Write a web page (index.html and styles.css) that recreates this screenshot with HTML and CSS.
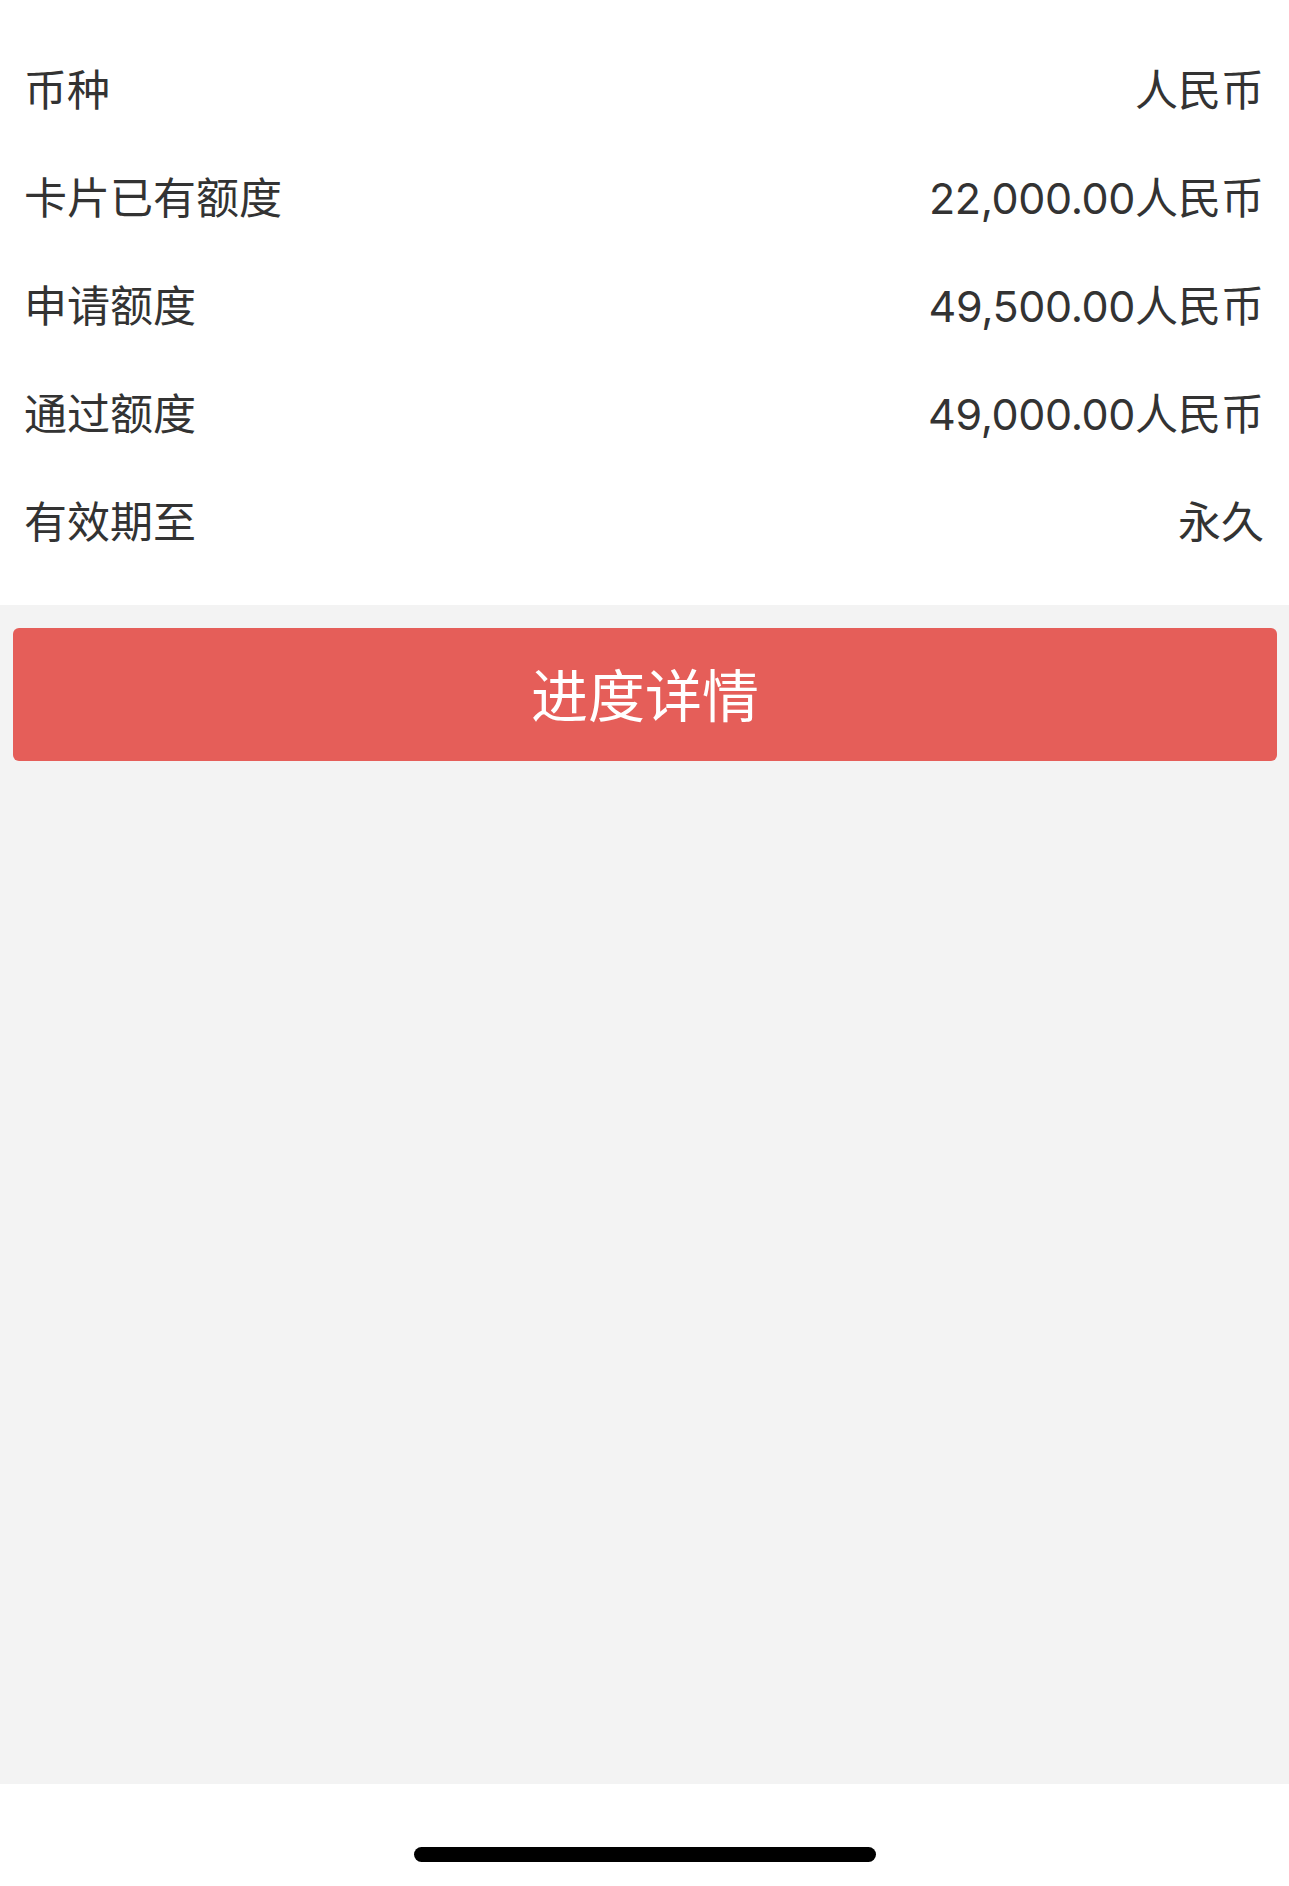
FILE: index.html
```html
<!DOCTYPE html>
<html lang="zh-CN">
<head>
<meta charset="utf-8">
<title>额度详情</title>
<link rel="stylesheet" href="styles.css">
</head>
<body>
<div class="page">
  <section class="info">
    <div class="row"><span class="label">币种</span><span class="value">人民币</span></div>
    <div class="row"><span class="label">卡片已有额度</span><span class="value"><span class="num">22,000.00</span>人民币</span></div>
    <div class="row"><span class="label">申请额度</span><span class="value"><span class="num">49,500.00</span>人民币</span></div>
    <div class="row"><span class="label">通过额度</span><span class="value"><span class="num">49,000.00</span>人民币</span></div>
    <div class="row"><span class="label">有效期至</span><span class="value">永久</span></div>
  </section>
  <div class="actions">
    <button class="btn">进度详情</button>
  </div>
  <div class="spacer"></div>
  <div class="home-bar"><span class="indicator"></span></div>
</div>
</body>
</html>
```
FILE: styles.css
```css
html, body {
  margin: 0;
  padding: 0;
  background: #f3f3f3;
}
.page {
  height: 1886px;
  display: flex;
  flex-direction: column;
  font-family: "Inter", "Noto Sans CJK SC", sans-serif;
  color: #333333;
}
.info {
  background: #ffffff;
  padding: 36px 25px 29px 24px;
}
.row {
  height: 108px;
  display: flex;
  align-items: center;
  justify-content: space-between;
  font-size: 43px;
}
.label, .value {
  line-height: 1;
}
.num {
  letter-spacing: -0.4px;
}
.actions {
  padding: 23px 12px 0 13px;
}
.btn {
  display: block;
  width: 100%;
  height: 133px;
  border: none;
  border-radius: 6px;
  background: #e55e59;
  color: #ffffff;
  font-family: "Noto Sans CJK SC", sans-serif;
  font-size: 57px;
  line-height: 1;
  padding: 0 0 4px;
}
.spacer {
  flex: 1;
}
.home-bar {
  height: 102px;
  background: #ffffff;
  display: flex;
  justify-content: center;
  align-items: flex-end;
  padding-bottom: 24px;
  box-sizing: border-box;
}
.indicator {
  display: block;
  width: 462px;
  height: 15px;
  border-radius: 8px;
  background: #000000;
}
```
